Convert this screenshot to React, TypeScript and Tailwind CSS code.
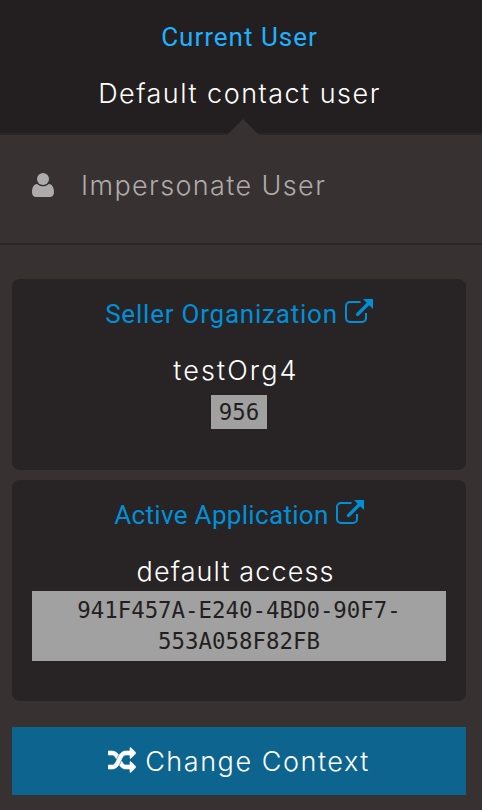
import React from "react";

const sans = "font-['Inter','Open_Sans',sans-serif]";
const din = "font-['Roboto','Liberation_Sans',sans-serif]";
const mono = "font-['DejaVu_Sans_Mono',monospace]";

function ExternalLinkIcon() {
  return (
    <svg className="h-6 w-[28px] shrink-0" viewBox="0 0 28 24" fill="none">
      <path d="M15.5 3H5A4 4 0 0 0 1 7V19A4 4 0 0 0 5 23H17A4 4 0 0 0 21 19V14" stroke="#0090da" strokeWidth="2" />
      <path d="M12.6 15.4L24 4" stroke="#0090da" strokeWidth="3.4" strokeLinecap="round" />
      <path d="M18 0H28V10Z" fill="#0090da" />
    </svg>
  );
}

function ShuffleIcon() {
  return (
    <svg className="h-[28px] w-[28px] shrink-0" viewBox="0 0 1792 1792" fill="#fff">
      <path d="M666 481q-60 92-137 273-22-45-37-72.5t-40.5-63.5-51-56.5-63-35-81.5-14.5h-224q-14 0-23-9t-9-23v-192q0-14 9-23t23-9h224q250 0 410 225zm1126 799q0 14-9 23l-320 320q-9 9-23 9-13 0-22.5-9.5t-9.5-22.5v-192q-32 0-85 .5t-81 1-73-1-71-5-64-10.5-63-18.5-58-28.5-59-40-55-53.5-56-69.5q59-93 136-273 22 45 37 72.5t40.5 63.5 51 56.5 63 35 81.5 14.5h256v-192q0-14 9-23t23-9q12 0 24 10l319 319q9 9 9 23zm0-896q0 14-9 23l-320 320q-9 9-23 9-13 0-22.5-9.5t-9.5-22.5v-192h-256q-48 0-87 15t-69 45-51 61.5-45 77.5q-32 62-78 171-29 66-49.5 111t-54 105-64 100-74 83-90 68.5-106.5 42-128 16.5h-224q-14 0-23-9t-9-23v-192q0-14 9-23t23-9h224q48 0 87-15t69-45 51-61.5 45-77.5q32-62 78-171 29-66 49.5-111t54-105 64-100 74-83 90-68.5 106.5-42 128-16.5h256v-192q0-14 9-23t23-9q12 0 24 10l319 319q9 9 9 23z" stroke="#fff" strokeWidth="40" />
    </svg>
  );
}

function UserIcon() {
  return (
    <svg className="h-6 w-[22px] shrink-0" viewBox="0 0 22 24" fill="#adabab">
      <circle cx="11" cy="6" r="6" />
      <path d="M5.2 11C6.8 12.5 8.8 13.3 11 13.3S15.2 12.5 16.8 11C20.8 11.2 22 15.4 22 19.3C22 22.3 20.4 24 17.8 24H4.2C1.6 24 0 22.3 0 19.3C0 15.4 1.2 11.2 5.2 11Z" />
    </svg>
  );
}

export default function App() {
  return (
    <div className={`h-[810px] w-[482px] overflow-hidden bg-[#373131] text-white ${sans}`}>
      <header className="relative flex h-[135px] flex-col items-center border-b-2 border-[#2a2627] bg-[#231f20] pr-[3px]">
        <h2 className={`mt-[17px] h-10 whitespace-nowrap text-[26px] leading-10 tracking-[1px] text-[#1fb0ff] ${din}`}>Current User</h2>
        <p className="mt-[17px] h-10 whitespace-nowrap text-[27px] font-light leading-10 tracking-[1.48px]">Default contact user</p>
        <svg className="absolute bottom-[-2px] left-[227px] h-[17px] w-8" viewBox="0 0 32 17">
          <path d="M0 17L16 1L32 17Z" fill="#373131" />
        </svg>
      </header>
      <div className="flex h-[110px] items-center border-b-2 border-[#2a2627] pl-8 pb-[6px]">
        <div className="flex pb-[2px]"><UserIcon /></div>
        <span className="ml-[27px] whitespace-nowrap text-[27px] font-light tracking-[1.38px] text-[#adabab]">Impersonate User</span>
      </div>
      <main className="flex flex-col pl-3 pr-4 pt-[34px]">
        <section className="flex h-[191px] flex-col items-center rounded-lg bg-[#282425] px-5">
          <h3 className={`mt-[15px] flex h-10 items-center gap-[7px] whitespace-nowrap text-[26px] leading-10 tracking-[0.78px] text-[#0090da] ${din}`}>
            Seller Organization<div className="-mt-[6px]"><ExternalLinkIcon /></div>
          </h3>
          <p className="mt-[17px] h-10 whitespace-nowrap pr-[6px] text-[27px] font-light leading-10 tracking-[2.1px]">testOrg4</p>
          <code className={`mt-1 h-[34px] bg-[#a1a1a1] px-2 text-[22.4px] leading-[34px] text-[#231f20] ${mono}`}>956</code>
        </section>
        <section className="mt-[10px] flex h-[221px] flex-col items-center rounded-lg bg-[#282425] px-5">
          <h3 className={`mt-[15px] flex h-10 items-center gap-[7px] whitespace-nowrap text-[26px] leading-10 tracking-[0.32px] text-[#0090da] ${din}`}>
            Active Application<div className="-mt-[6px]"><ExternalLinkIcon /></div>
          </h3>
          <p className="mt-[17px] h-[39px] whitespace-nowrap pr-[7px] text-[27px] font-light leading-10 tracking-[1.1px]">default access</p>
          <code className={`h-[70px] w-full bg-[#a1a1a1] pt-1 text-center text-[22.4px] leading-[31px] text-[#231f20] ${mono}`}>
            941F457A-E240-4BD0-90F7-<br />553A058F82FB
          </code>
        </section>
        <button className="mt-[26px] flex h-[68px] items-center justify-center gap-[9px] bg-[#0c648f]">
          <div className="-mt-px"><ShuffleIcon /></div>
          <span className="mt-[2px] whitespace-nowrap text-[27px] font-light tracking-[1.55px]">Change Context</span>
        </button>
      </main>
    </div>
  );
}
